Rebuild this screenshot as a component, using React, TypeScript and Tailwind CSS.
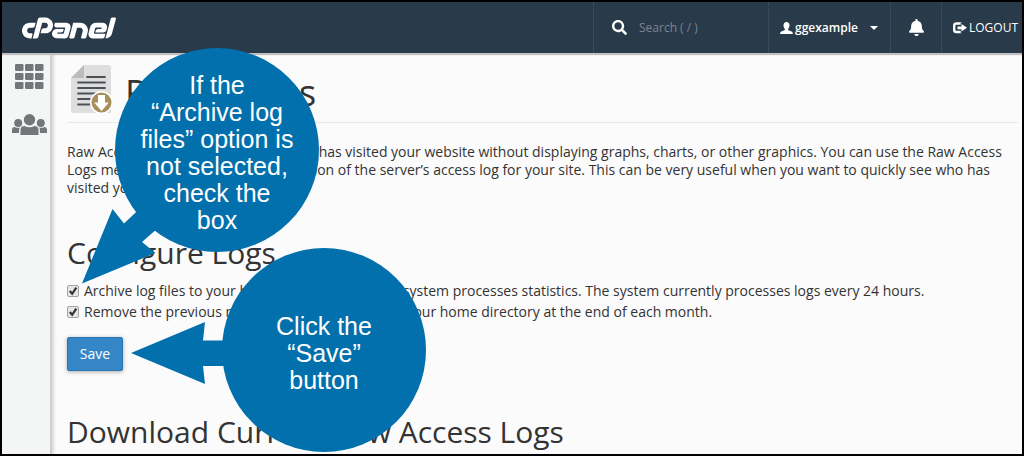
import type { ReactNode } from "react";
import { SiCpanel } from "react-icons/si";
import { FaBell, FaSearch } from "react-icons/fa";

function UserIcon() {
  return (
    <svg viewBox="0 0 13 12" className="h-3 w-[13px] shrink-0" fill="currentColor" aria-hidden="true">
      <path d="M6.500 0C8.500 0 9.500 1.300 9.500 3.200c0 1.600-.6 2.800-1.300 3.500-.3.500-.2 1.200.4 1.500l3 1.300c.8.400 1.200 1 1.300 2.500H.1c.1-1.500.5-2.100 1.300-2.500l3-1.300c.6-.3.700-1 .4-1.500C4.100 6 3.500 4.800 3.500 3.200 3.500 1.300 4.500 0 6.500 0z" />
    </svg>
  );
}

function LogoutIcon() {
  return (
    <svg viewBox="0 0 14 12" className="h-3 w-3.5 shrink-0" aria-hidden="true">
      <path d="M8.500 1.500H3.500Q1.200 1.500 1.200 3.500v4.500q0 2 2.300 2H8.500" fill="none" stroke="currentColor" strokeWidth="2.400" />
      <path d="M4.500 4.400h4V2L14 5.800 8.500 9.600V7.200h-4z" fill="currentColor" stroke="#293a4a" strokeWidth="1.600" paintOrder="stroke" />
    </svg>
  );
}

function GridIcon() {
  return (
    <svg viewBox="0 0 29 25" className="h-[25px] w-[29px]" fill="currentColor" aria-hidden="true">
      {[0, 10, 20].map((x) =>
        [0, 9, 18].map((y) => <rect key={`${x}-${y}`} x={x} y={y} width="8.500" height="7" rx="1.200" />)
      )}
    </svg>
  );
}

function UsersIcon() {
  return (
    <svg viewBox="0 0 35 22" className="h-[22px] w-[35px]" fill="currentColor" aria-hidden="true">
      <circle cx="17.500" cy="5.700" r="5.700" />
      <circle cx="6.200" cy="9" r="4" />
      <circle cx="28.800" cy="9" r="4" />
      <path d="M8.500 21V16q0-4 4-4 5 2.600 10 0 4 0 4 4v5z" />
      <path d="M0 19v-3q0-3 2.600-3 2.600 1.400 5 .5-.6 1.200-.6 5.500z" />
      <path d="M35 19v-3q0-3-2.600-3-2.600 1.400-5 .5.600 1.200.6 5.500z" />
    </svg>
  );
}

function LogFileIcon() {
  return (
    <svg viewBox="0 0 42 49" className="h-[49px] w-[42px] shrink-0" aria-hidden="true">
      <path d="M13 0h24.500Q40 0 40 2.500V48H2.500Q0 48 0 45.500V13z" fill="#dedede" />
      <path d="M13 0v13H0z" fill="#bcbcbc" />
      <path d="M16 12h18M7 17.500h27M7 23h27M7 28.500h17M7 34h12M7 39.500h12" stroke="#4c5058" strokeWidth="1.800" strokeLinecap="round" />
      <circle cx="30.500" cy="37.500" r="11.500" fill="#fff" />
      <circle cx="30.500" cy="37.500" r="10" fill="#a8905c" />
      <path d="M27 30h7v7.500h3.800L30.500 46 23.200 37.500H27z" fill="#fff" />
    </svg>
  );
}

function LogOption({ id, children }: { id: string; children: ReactNode }) {
  return (
    <div className="flex h-[21px] items-center gap-[5px]">
      <span className="relative flex h-3 w-3 shrink-0">
        <input
          id={id}
          type="checkbox"
          defaultChecked
          className="peer h-3 w-3 appearance-none rounded-[2px] border border-[#a3a3a3] bg-[#e6e6e6]"
        />
        <svg
          viewBox="0 0 12 12"
          className="pointer-events-none absolute inset-0 hidden h-3 w-3 peer-checked:block"
          aria-hidden="true"
        >
          <path d="M2.800 6l2.400 2.800L9.300 2.700" fill="none" stroke="#333" strokeWidth="2.200" />
        </svg>
      </span>
      <label htmlFor={id}>{children}</label>
    </div>
  );
}

export default function App() {
  return (
    <div className="relative flex min-h-screen flex-col overflow-hidden border-2 border-black bg-[#fbfbfb] font-['Open_Sans',sans-serif] text-[14px] leading-[18px] text-[#333]">
      <header className="z-10 flex h-[51px] items-stretch justify-between bg-[#293a4a] text-[12px] text-white shadow-[0_2px_1px_#c0c0c0]">
        <a href="#home" aria-label="cPanel" className="flex items-center pl-5">
          <SiCpanel className="h-[94px] w-[94px]" />
        </a>
        <div className="flex items-stretch">
          <div className="flex w-[175px] items-center gap-3 border-l border-dotted border-[#4a5568] pl-[18px]">
            <FaSearch className="h-[15px] w-[15px] shrink-0" aria-hidden="true" />
            <input
              type="text"
              aria-label="Search"
              placeholder="Search ( / )"
              className="w-full min-w-0 bg-transparent placeholder:text-[#7d858b] focus:outline-none"
            />
          </div>
          <button type="button" className="flex w-[122px] items-center border-l border-dotted border-[#4a5568] pl-[11px] font-semibold">
            <UserIcon />
            <span className="pl-0.5">ggexample</span>
            <span className="ml-3 border-x-4 border-t-4 border-x-transparent border-t-white" />
          </button>
          <button
            type="button"
            aria-label="Notifications"
            className="flex w-[51px] items-center justify-center border-l border-dotted border-[#4a5568]"
          >
            <FaBell className="h-[17px] w-[17px]" />
          </button>
          <a href="#logout" className="flex w-[81px] items-center border-l border-dotted border-[#4a5568] pl-[11px]">
            <LogoutIcon />
            <span className="pl-0.5 font-medium">LOGOUT</span>
          </a>
        </div>
      </header>

      <div className="flex grow">
        <nav className="flex w-[50px] shrink-0 flex-col items-center gap-[25px] border-r-2 border-[#cfd0d0] bg-[#f4f6f6] pt-[11px] pl-1.5 text-[#74777a] shadow-[1px_0_4px_#c8c8c8]">
          <a href="#tools" aria-label="Home">
            <GridIcon />
          </a>
          <a href="#users" aria-label="User Manager">
            <UsersIcon />
          </a>
        </nav>

        <main className="min-w-0 grow pt-3 pr-1 pl-[15px]">
          <div className="flex h-[58px] items-start gap-3 border-b border-[#e8e8e8] pl-1">
            <LogFileIcon />
            <h1 className="pt-2 text-[36px] leading-[40px]">Raw Access</h1>
          </div>
          <p className="pt-5 pr-2">
            Raw Access Logs allow you to see who has visited your website without displaying graphs, charts, or other
            graphics. You can use the Raw Access Logs menu to download a zipped version of the server’s access log for
            your site. This can be very useful when you want to quickly see who has visited your site.
          </p>

          <h2 className="pt-9 text-[30px] leading-[40px]">Configure Logs</h2>
          <form className="pt-[7px]" onSubmit={(event) => event.preventDefault()}>
            <LogOption id="archive">
              Archive log files to your home directory after the system processes statistics. The system currently
              processes logs every 24 hours.
            </LogOption>
            <LogOption id="remove">
              Remove the previous month’s archived logs from your home directory at the end of each month.
            </LogOption>
            <button
              type="submit"
              className="mt-[15px] h-[34px] w-14 rounded-[2px] border border-[#2a75b3] bg-[#3486c7] text-white shadow-[0_1px_4px_#aaa]"
            >
              Save
            </button>
          </form>

          <h2 className="pt-[41px] text-[30px] leading-[40px]">Download Current Raw Access Logs</h2>
        </main>
      </div>

      <svg
        viewBox="0 0 440 456"
        className="pointer-events-none absolute -top-0.5 -left-0.5 z-20 h-[456px] w-[440px]"
        fill="#0270ac"
        aria-hidden="true"
      >
        <path d="M82 283.500L112.500 209l11.500 14.500 18-17 20 18-20 17.500 13.500 11z" />
        <path d="M131 353l74-31-2 18.500h40v25.500h-40l2 18z" />
      </svg>
      <div className="absolute top-[46px] left-[113px] z-20 flex h-[204px] w-[204px] items-center justify-center rounded-full bg-[#0270ac] pt-1.5 text-center font-['Liberation_Sans',sans-serif] text-[25px] leading-[27px] text-white">
        <p>
          If the
          <br />
          “Archive log
          <br />
          files” option is
          <br />
          not selected,
          <br />
          check the
          <br />
          box
        </p>
      </div>
      <div className="absolute top-[246px] left-[220px] z-20 flex h-[204px] w-[204px] items-center justify-center rounded-full bg-[#0270ac] pt-1.5 text-center font-['Liberation_Sans',sans-serif] text-[25px] leading-[27px] text-white">
        <p>
          Click the
          <br />
          “Save”
          <br />
          button
        </p>
      </div>
    </div>
  );
}
